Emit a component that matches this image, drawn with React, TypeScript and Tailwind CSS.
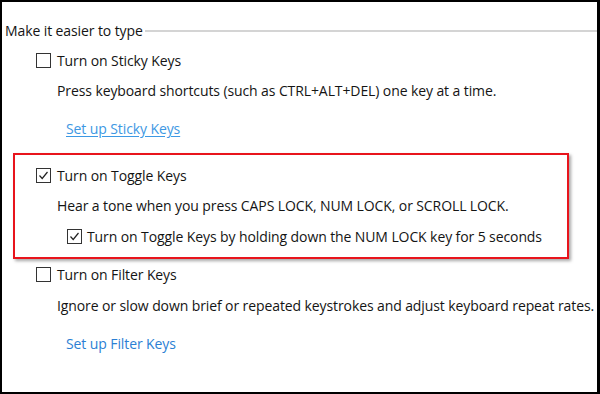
import React from "react";

function Check({ checked }: { checked?: boolean }) {
  return (
    <span className="w-[15px] h-[15px] border border-[#333333] bg-white flex items-center justify-center shrink-0">
      {checked && (
        <svg width="11" height="11" viewBox="0 0 11 11">
          <polyline points="1.5,5.5 4.2,8.5 9.5,2" fill="none" stroke="#222" strokeWidth="1.2" />
        </svg>
      )}
    </span>
  );
}

function Row({ children, className = "" }: { children: React.ReactNode; className?: string }) {
  return <div className={`h-5 flex items-center whitespace-nowrap ${className}`}>{children}</div>;
}

export default function App() {
  return (
    <div
      className="w-[600px] h-[394px] bg-white border-t-2 border-l-2 border-b-2 border-r-[3px] border-black overflow-hidden text-[14px] tracking-[-0.1px] text-[#141414] pt-[18px]"
      style={{ fontFamily: '"Open Sans", "Noto Sans", sans-serif' }}
    >
      <Row className="pl-[3px]">
        <span>Make it easier to type</span>
        <span className="flex-1 h-[2px] bg-[#d4d4d4] ml-[2px] mt-[1px]" />
      </Row>

      <Row className="mt-[10px] pl-[34px] gap-[6px]">
        <Check />
        <span>Turn on Sticky Keys</span>
      </Row>
      <Row className="mt-[10px] pl-[55px]">
        Press keyboard shortcuts (such as CTRL+ALT+DEL) one key at a time.
      </Row>
      <Row className="mt-[18px] pl-[64px]">
        <span className="text-[#3d98e3] underline underline-offset-2">Set up Sticky Keys</span>
      </Row>

      <div className="mt-[15px] ml-[11px] w-[556px] border-2 border-[#e8141c] pt-[10px] pb-[11px] shadow-[2px_2px_3px_rgba(0,0,0,0.35)]">
        <Row className="pl-[21px] gap-[6px]">
          <Check checked />
          <span>Turn on Toggle Keys</span>
        </Row>
        <Row className="mt-[10px] pl-[42px]">
          Hear a tone when you press CAPS LOCK, NUM LOCK, or SCROLL LOCK.
        </Row>
        <Row className="mt-[11px] pl-[52px] gap-[5px]">
          <Check checked />
          <span>Turn on Toggle Keys by holding down the NUM LOCK key for 5 seconds</span>
        </Row>
      </div>

      <Row className="mt-[5px] pl-[34px] gap-[6px]">
        <Check />
        <span>Turn on Filter Keys</span>
      </Row>
      <Row className="mt-[11px] pl-[55px]">
        Ignore or slow down brief or repeated keystrokes and adjust keyboard repeat rates.
      </Row>
      <Row className="mt-[18px] pl-[64px]">
        <span className="text-[#2b7fd4]">Set up Filter Keys</span>
      </Row>
    </div>
  );
}
